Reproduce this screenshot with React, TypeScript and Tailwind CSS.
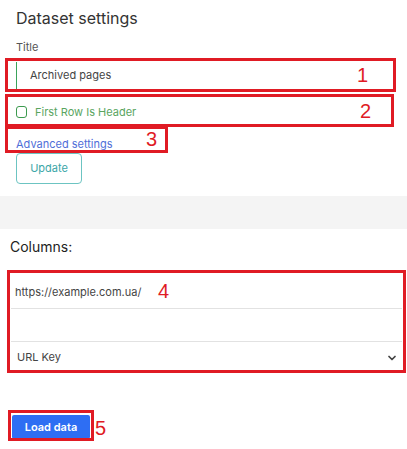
import { ChevronDown } from "lucide-react";

const font = { fontFamily: "Inter, 'Noto Sans', sans-serif" };

// red annotation frames drawn over the screenshot
function Mark({ className, n, numClass }: { className: string; n: string; numClass: string }) {
  return (
    <div className={`pointer-events-none absolute border-[3px] border-[#e01b24] ${className}`}>
      <span className={`absolute text-[20px] leading-none text-[#e01b24] ${numClass}`} style={{ fontFamily: "'Liberation Sans', sans-serif" }}>
        {n}
      </span>
    </div>
  );
}

export default function App() {
  return (
    <div className="relative h-[449px] w-[407px] overflow-hidden bg-white" style={font}>
      <div className="rounded-b-lg bg-white px-4 pb-[12px] pt-[8px]">
        <h1 className="text-[16px] leading-[20px] text-[#333]">Dataset settings</h1>
        <div className="mt-[12px] text-[11px] leading-[14px] text-[#555]">Title</div>
        <div className="mt-[8px] flex h-[27px] items-center border-l border-[#3aa35a] pl-[13px] text-[11px] text-[#444]">
          Archived pages
        </div>
        <label className="mt-[16px] flex h-[14px] items-center gap-[8px] text-[11px] text-[#5aa55f]">
          <span className="h-[12px] w-[11px] rounded-[3px] border border-[#3c9a4e]" />
          First Row Is Header
        </label>
        <a className="mt-[18px] block text-[11px] leading-[14px] text-[#4f6ed8]">Advanced settings</a>
        <button className="mt-[2px] h-[31px] w-[66px] rounded-[4px] border border-[#6cc4c2] text-[11px] text-[#3ba6a8]">
          Update
        </button>
      </div>
      <div className="h-[33px] bg-[#f4f4f4]" />
      <div className="pl-[10px] pr-[5px] pt-[8px]">
        <div className="text-[14px] leading-[20px] text-[#222]">Columns:</div>
        <div className="mt-[19px] ml-[1px] flex flex-col">
          <div className="flex h-[33px] items-center border-b border-[#e2e2e2] px-[4px] text-[11px] text-[#444]">
            https://example.com.ua/
          </div>
          <div className="h-[33px] border-b border-[#e2e2e2]" />
          <div className="flex h-[31px] items-center justify-between pl-[6px] pr-[4px] text-[11px] text-[#444]">
            URL Key
            <ChevronDown size={12} strokeWidth={3.5} className="text-[#444]" />
          </div>
        </div>
        <button className="mt-[42px] ml-[2px] h-[24px] w-[78px] rounded-[2px] bg-[#2e6ef3] text-[11px] font-semibold text-white">
          Load data
        </button>
      </div>

      <Mark className="left-[5px] top-[58px] h-[34px] w-[391px]" n="1" numClass="right-[25px] top-[4px]" />
      <Mark className="left-[5px] top-[94px] h-[33px] w-[389px]" n="2" numClass="right-[20px] top-[4px]" />
      <Mark className="left-[5px] top-[126px] h-[27px] w-[163px]" n="3" numClass="right-[8px] top-[0px]" />
      <Mark className="left-[7px] top-[270px] h-[103px] w-[399px]" n="4" numClass="left-[148px] top-[8px]" />
      <Mark className="left-[8px] top-[410px] h-[31px] w-[86px]" n="5" numClass="-right-[15px] top-[5px]" />
    </div>
  );
}
